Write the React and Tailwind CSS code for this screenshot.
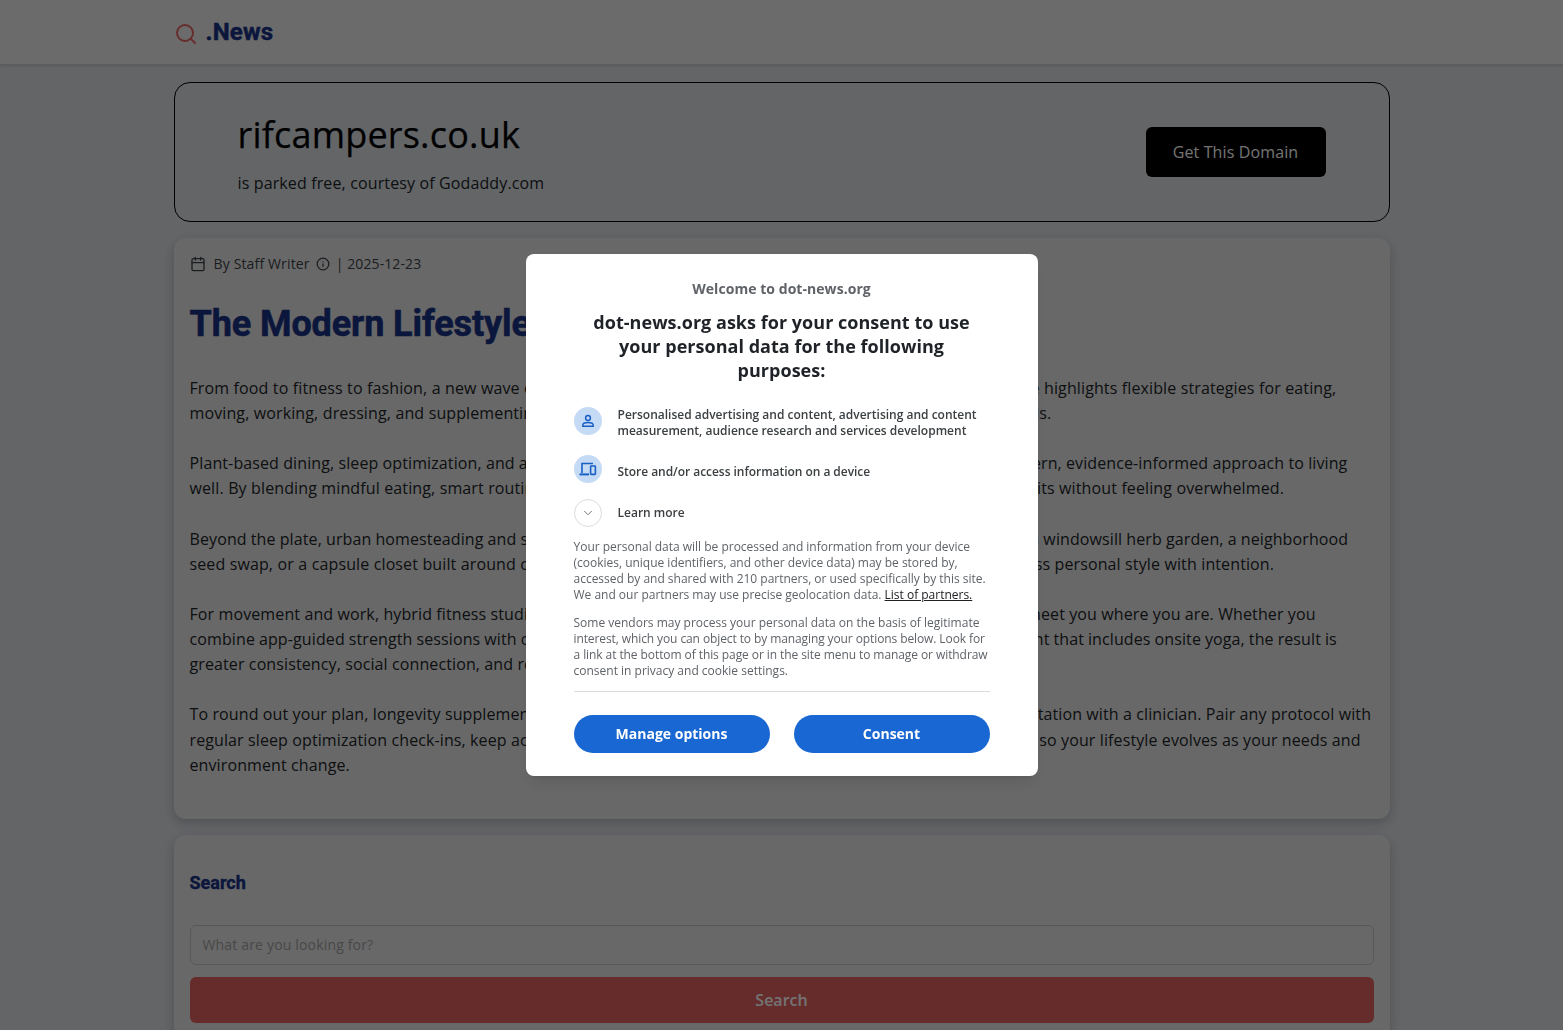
import React from "react";
import { Search, Calendar, Info, ChevronDown } from "lucide-react";

const paragraphs = [
  [
    { text: "From food to fitness to fashion, a new wave of bold lifestyle choices is slowly reshaping daily routines. This guide highlights flexible strategies for eating,", tune: "[word-spacing:0.13px]" },
    { text: "moving, working, dressing, and supplementing with care, so you can build a life that supports the long-term goals.", tune: "[word-spacing:0.16px]" },
  ],
  [
    { text: "Plant-based dining, sleep optimization, and a focus on whole-person health and true balance all define this modern, evidence-informed approach to living", tune: "[word-spacing:-0.1px]" },
    { text: "well. By blending mindful eating, smart routines, and realistic goals, you can build and maintain lasting daily habits without feeling overwhelmed.", tune: "[word-spacing:0.15px]" },
  ],
  [
    { text: "Beyond the plate, urban homesteading and slow fashion help you reconnect with the things you own and grow: a windowsill herb garden, a neighborhood", tune: "[word-spacing:-0.2px]" },
    { text: "seed swap, or a capsule closet built around classic, reusable pieces can help curb waste, save money, and express personal style with intention.", tune: "[word-spacing:0.14px]" },
  ],
  [
    { text: "For movement and work, hybrid fitness studios and flexible remote careers today are thoughtfully designed to meet you where you are. Whether you" },
    { text: "combine app-guided strength sessions with community walks with close friends or choose a remote job placement that includes onsite yoga, the result is", tune: "[word-spacing:-0.3px]" },
    { text: "greater consistency, social connection, and room for the things that matter most." },
  ],
  [
    { text: "To round out your plan, longevity supplements can help fill specific nutritional gaps, ideally after a careful consultation with a clinician. Pair any protocol with" },
    { text: "regular sleep optimization check-ins, keep activity varied and enjoyable, and revisit your main goals each season so your lifestyle evolves as your needs and" },
    { text: "environment change." },
  ],
];

function PersonIcon() {
  return (
    <svg width="14" height="14" viewBox="0 0 14 14" fill="none" stroke="#1a5fc4" strokeWidth="1.5">
      <circle cx="7" cy="4" r="2.4" />
      <path d="M1.8 11.2c0-1.7 2.5-2.7 5.2-2.7s5.2 1 5.2 2.7v1.1H1.8z" />
    </svg>
  );
}

function DeviceIcon() {
  return (
    <svg width="18" height="14" viewBox="0 0 18 14" fill="none" stroke="#1a5fc4" strokeWidth="1.6">
      <path d="M3 11V1.5h11" />
      <path d="M0.5 12.4h9.5" strokeWidth="2" />
      <rect x="11.6" y="4" width="4.8" height="8.4" rx="0.6" />
    </svg>
  );
}

function Purpose({ icon, className, children }) {
  return (
    <div className={className}>
      <div className="mt-px flex h-7 w-7 shrink-0 items-center justify-center rounded-full bg-[#c5daf5]">
        {icon}
      </div>
      {children}
    </div>
  );
}

export default function App() {
  return (
    <div className="h-[1030px] overflow-hidden bg-[#dce0e5] font-['Open_Sans',sans-serif] text-[#212529]">
      <header className="h-[65px] border-b border-[#cfcfcf] bg-[#eeeeee] shadow-sm">
        <div className="mx-auto flex h-full w-[1216px] items-center">
          <Search size={24} strokeWidth={2} className="mt-1 text-[#e36262]" />
          <span className="ml-2 font-['Roboto',sans-serif] text-2xl font-bold tracking-[0.2px] text-[#1a3285] [-webkit-text-stroke:0.5px_#1a3285]">.News</span>
        </div>
      </header>

      <main className="mx-auto flex w-[1216px] flex-col gap-4 pt-[17px]">
        <section className="flex h-[140px] items-center justify-between rounded-2xl border border-black px-[63px]">
          <div className="pt-1">
            <h1 className="text-4xl leading-[44px] font-medium tracking-[0.2px] text-black [-webkit-text-stroke:0.25px_#000]">rifcampers.co.uk</h1>
            <p className="mt-[14px] text-base leading-6 tracking-[0.13px]">is parked free, courtesy of Godaddy.com</p>
          </div>
          <button className="h-[50px] w-[180px] rounded-md bg-black text-base tracking-[0.12px] text-white">Get This Domain</button>
        </section>

        <article className="h-[581px] rounded-xl bg-[#e7e7e7] p-4 shadow-[0_4px_12px_rgba(0,0,0,0.2)]">
          <div className="flex h-5 items-center text-sm text-[#3d4349]">
            <Calendar size={16} strokeWidth={2} />
            <span className="ml-2 tracking-[0.15px]">By Staff Writer</span>
            <Info size={14} strokeWidth={2.2} className="ml-[6px]" />
            <span className="ml-[6px] tracking-[0.1px]">| 2025-12-23</span>
          </div>
          <h2 className="mt-[27px] font-['Roboto',sans-serif] text-4xl leading-[46px] font-bold tracking-[-0.1px] text-[#1a3285] [-webkit-text-stroke:0.6px_#1a3285]">
            The Modern Lifestyle Playbook: Smart Habits
          </h2>
          <div className="mt-[28.7px] text-base leading-[25.14px] tracking-[0.11px] whitespace-nowrap">
            {paragraphs.map((lines, i) => (
              <p key={i} className="mb-[25.14px]">
                {lines.map((line, j) => (
                  <span key={j} className={line.tune ? `block ${line.tune}` : "block"}>{line.text}</span>
                ))}
              </p>
            ))}
          </div>
        </article>

        <section className="rounded-xl bg-[#e7e7e7] p-4 shadow-[0_4px_12px_rgba(0,0,0,0.2)]">
          <h3 className="mt-5 font-['Roboto',sans-serif] text-lg leading-6 font-bold text-[#1a3285] [-webkit-text-stroke:0.4px_#1a3285]">Search</h3>
          <div className="mt-[30px] flex h-10 items-center rounded-md border border-[#c4c4c4] px-3 text-sm tracking-[0.17px] text-[#a0a0a0]">
            What are you looking for?
          </div>
          <button className="mt-3 h-[46px] w-full rounded-md bg-[#e36262] text-base font-semibold text-white">Search</button>
        </section>
      </main>

      <div className="fixed inset-0 flex items-center justify-center bg-black/55">
        <div className="w-[512px] rounded-lg bg-white px-12 pt-[25px] pb-[23px] shadow-lg">
          <p className="text-center text-sm leading-5 font-bold tracking-[0.05px] text-[#5f6368]">Welcome to dot-news.org</p>
          <h2 className="mt-[11px] text-center text-lg leading-6 font-bold tracking-[0.03px] text-[#1f2328]">
            dot-news.org asks for your consent to use your personal data for the following purposes:
          </h2>

          <div className="mt-6 text-xs leading-4 font-semibold text-[#3c4043]">
            <Purpose icon={<PersonIcon />} className="flex h-8 items-start gap-4">
              <p className="pt-px">Personalised advertising and content, advertising and content measurement, audience research and services development</p>
            </Purpose>
            <Purpose icon={<DeviceIcon />} className="mt-4 flex h-[30px] items-start gap-4">
              <p className="pt-[10px] tracking-[-0.04px]">Store and/or access information on a device</p>
            </Purpose>
            <div className="mt-[15px] flex h-7 items-center gap-4">
              <div className="flex h-7 w-7 items-center justify-center rounded-full border border-[#dadce0] bg-white">
                <ChevronDown size={14} strokeWidth={1.5} className="text-[#5f6368]" />
              </div>
              <span>Learn more</span>
            </div>
          </div>

          <p className="mt-3 text-xs leading-4 tracking-[-0.01px] text-[#5f6368]">
            Your personal data will be processed and information from your device (cookies, unique identifiers, and other device data) may be stored by, accessed by and shared with 210 partners, or used specifically by this site. We and our partners may use precise geolocation data.{" "}
            <a className="text-[#202124] underline">List of partners.</a>
          </p>
          <p className="mt-3 text-xs leading-4 whitespace-nowrap text-[#5f6368]">
            <span className="block">Some vendors may process your personal data on the basis of legitimate</span>
            <span className="block tracking-[-0.1px]">interest, which you can object to by managing your options below. Look for</span>
            <span className="block tracking-[-0.08px]">a link at the bottom of this page or in the site menu to manage or withdraw</span>
            <span className="block">consent in privacy and cookie settings.</span>
          </p>

          <div className="mt-3 h-px bg-[#dadce0]" />

          <div className="mt-[23px] flex justify-between">
            <button className="h-[38px] w-[196px] rounded-full bg-[#1967d2] text-sm font-bold text-white">Manage options</button>
            <button className="h-[38px] w-[196px] rounded-full bg-[#1967d2] text-sm font-bold text-white">Consent</button>
          </div>
        </div>
      </div>
    </div>
  );
}
